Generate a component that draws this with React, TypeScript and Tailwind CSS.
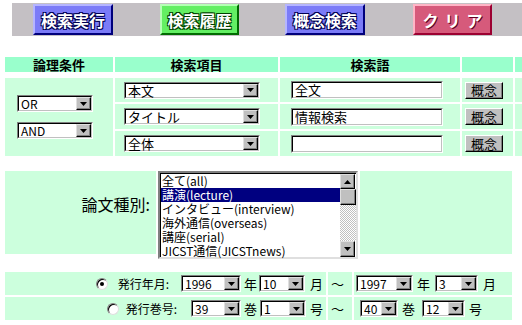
import React from "react";

function DropBtn({ up = false }: { up?: boolean }) {
  return (
    <div className="w-[15px] shrink-0 flex items-center justify-center bg-[#c0c0c0] border border-t-[#dfdfdf] border-l-[#dfdfdf] border-r-black border-b-black shadow-[inset_-1px_-1px_0_#808080]">
      <svg width="7" height="4" viewBox="0 0 7 4">
        {up ? <polygon points="0,4 7,4 3.5,0" fill="#000" /> : <polygon points="0,0 7,0 3.5,4" fill="#000" />}
      </svg>
    </div>
  );
}

function Select({ value, w, small = false }: { value: string; w: string; small?: boolean }) {
  return (
    <div className={`${w} h-[17px] shrink-0 flex border border-t-[#808080] border-l-[#808080] border-r-white border-b-white`}>
      <div className="flex flex-1 min-w-0 border border-t-black border-l-black border-r-[#c0c0c0] border-b-[#c0c0c0] bg-white">
        <span className={`flex-1 flex items-center pl-[2px] ${small ? "text-[12px]" : "text-[13px]"} leading-[13px] whitespace-nowrap text-black`}>{value}</span>
        <DropBtn />
      </div>
    </div>
  );
}

function TextInput({ value }: { value: string }) {
  return (
    <div className="w-[152px] h-[18px] flex border border-t-[#808080] border-l-[#808080] border-r-white border-b-white">
      <div className="flex-1 flex items-center border border-t-black border-l-black border-r-[#c0c0c0] border-b-[#c0c0c0] bg-white pl-[2px] text-[13px] leading-[14px] text-black whitespace-nowrap">
        {value}
      </div>
    </div>
  );
}

function ConceptBtn() {
  return (
    <div className="w-[38px] h-[17px] flex items-center justify-center bg-[#c0c0c0] border border-t-white border-l-white border-r-black border-b-black shadow-[inset_-1px_-1px_0_#808080] text-[13px] leading-[14px] text-black">
      概念
    </div>
  );
}

function Radio({ checked = false }: { checked?: boolean }) {
  return (
    <span className="w-[12px] h-[12px] shrink-0 rounded-full bg-white border border-t-[#808080] border-l-[#808080] border-r-[#dfdfdf] border-b-[#dfdfdf] shadow-[inset_1px_1px_0_#000] flex items-center justify-center">
      {checked && <span className="w-[4px] h-[4px] rounded-full bg-black" />}
    </span>
  );
}

export default function App() {
  const kinds = [
    "全て(all)",
    "講演(lecture)",
    "インタビュー(interview)",
    "海外通信(overseas)",
    "講座(serial)",
    "JICST通信(JICSTnews)",
  ];

  return (
    <div className="w-[522px] h-[325px] overflow-hidden bg-white font-['Noto_Sans_CJK_JP',sans-serif] text-black">
      {/* button bar */}
      <div className="ml-[12px] mt-[3px] h-[33px] bg-[#c4c0c4] flex items-center">
        <div className="ml-[21px] w-[80px] h-[31px] flex items-center justify-center bg-[#7b7bf7] border-2 border-t-[#b5b5ff] border-l-[#b5b5ff] border-r-[#00007b] border-b-[#00007b] text-white text-[16px] font-bold leading-[18px] [text-shadow:1px_1px_0_#000050,-1px_-1px_0_#000050,1px_-1px_0_#000050,-1px_1px_0_#000050]">
          検索実行
        </div>
        <div className="ml-[47px] w-[79px] h-[31px] flex items-center justify-center bg-[#63ef63] border-2 border-t-[#b5ffb5] border-l-[#b5ffb5] border-r-[#006b00] border-b-[#006b00] text-white text-[16px] font-bold leading-[18px] [text-shadow:1px_1px_0_#004000,-1px_-1px_0_#004000,1px_-1px_0_#004000,-1px_1px_0_#004000]">
          検索履歴
        </div>
        <div className="ml-[46px] w-[80px] h-[31px] flex items-center justify-center bg-[#7b7bf7] border-2 border-t-[#b5b5ff] border-l-[#b5b5ff] border-r-[#00007b] border-b-[#00007b] text-white text-[16px] font-bold leading-[18px] [text-shadow:1px_1px_0_#000050,-1px_-1px_0_#000050,1px_-1px_0_#000050,-1px_1px_0_#000050]">
          概念検索
        </div>
        <div className="ml-[48px] w-[79px] h-[31px] flex items-center justify-center bg-[#d65a7b] border-2 border-t-[#ffb5c6] border-l-[#ffb5c6] border-r-[#9c0031] border-b-[#9c0031] text-white text-[16px] font-bold leading-[18px] tracking-[6px] pl-[6px] [text-shadow:1px_1px_0_#600020]">
          クリア
        </div>
      </div>

      {/* search conditions */}
      <div className="ml-[5px] mt-[21px] grid grid-cols-[108px_163px_180px_51px_40px] gap-x-[2px]">
        <div className="h-[15px] bg-[#99ffcc] flex items-center justify-center text-[13px] font-bold leading-[15px]">論理条件</div>
        <div className="h-[15px] bg-[#99ffcc] flex items-center justify-center text-[13px] font-bold leading-[15px]">検索項目</div>
        <div className="h-[15px] bg-[#99ffcc] flex items-center justify-center text-[13px] font-bold leading-[15px]">検索語</div>
        <div className="h-[15px] bg-[#99ffcc]" />
        <div className="h-[15px] bg-[#99ffcc]" />
      </div>
      <div className="ml-[5px] mt-[6px] grid grid-cols-[108px_163px_180px_51px_40px] grid-rows-[24px_25px_25px] gap-[2px]">
        <div className="row-span-3 bg-[#ccffdd] flex flex-col justify-center gap-[10px] pl-[12px]">
          <Select value="OR" w="w-[76px]" small />
          <Select value="AND" w="w-[76px]" small />
        </div>
        {[
          ["本文", "全文"],
          ["タイトル", "情報検索"],
          ["全体", ""],
        ].map(([item, word], i) => (
          <React.Fragment key={i}>
            <div className="bg-[#ccffdd] flex items-center pl-[9px]">
              <Select value={item} w="w-[136px]" />
            </div>
            <div className="bg-[#ccffdd] flex items-center pl-[11px]">
              <TextInput value={word} />
            </div>
            <div className="bg-[#ccffdd] flex items-center pl-[3px]">
              <ConceptBtn />
            </div>
            <div className="bg-[#ccffdd]" />
          </React.Fragment>
        ))}
      </div>

      {/* paper kind */}
      <div className="ml-[5px] mt-[15px] flex items-start gap-[2px]">
        <div className="w-[151px] h-[83px] bg-[#ccffdd] flex justify-end pt-[24px] pr-[6px] text-[16px] leading-[18px]">
          論文種別:
        </div>
        <div className="w-[200px] h-[88px] flex border-2 border-t-[#808080] border-l-[#808080] border-r-[#dfdfdf] border-b-[#dfdfdf] shadow-[inset_1px_1px_0_#000] bg-white">
          <div className="flex-1 min-w-0 pt-[1px] pl-[1px]">
            {kinds.map((k, i) => (
              <div
                key={k}
                className={`h-[14px] pl-[1px] flex items-center text-[12px] leading-[14px] whitespace-nowrap ${i === 1 ? "bg-[#000080] text-white" : "text-black"}`}
              >
                {k}
              </div>
            ))}
          </div>
          <div className="w-[16px] flex flex-col pt-[1px]">
            <div className="h-[15px] flex">
              <DropBtn up />
            </div>
            <div className="h-[16px] bg-[#c0c0c0] border border-t-[#dfdfdf] border-l-[#dfdfdf] border-r-black border-b-black shadow-[inset_-1px_-1px_0_#808080]" />
            <div className="flex-1 [background:repeating-conic-gradient(#c0c0c0_0%_25%,#ffffff_0%_50%)_0_0/2px_2px]" />
            <div className="h-[16px] flex">
              <DropBtn />
            </div>
          </div>
        </div>
        <div className="w-[152px] h-[83px] bg-[#ccffdd]" />
      </div>

      {/* publication dates */}
      <div className="ml-[5px] mt-[13px] flex flex-col gap-[2px] text-[13px] leading-[15px]">
        <div className="flex gap-[2px] h-[23px]">
          <div className="w-[321px] bg-[#ccffdd] flex items-center justify-end pr-[3px]">
            <Radio checked />
            <span className="ml-[10px] text-[12px]">発行年月:</span>
            <span className="ml-[12px]">
              <Select value="1996" w="w-[60px]" small />
            </span>
            <span className="ml-[3px]">年</span>
            <span className="ml-[2px]">
              <Select value="10" w="w-[46px]" small />
            </span>
            <span className="ml-[5px]">月</span>
          </div>
          <div className="w-[24px] bg-[#ccffdd] flex items-center pl-[3px]">～</div>
          <div className="w-[158px] bg-[#ccffdd] flex items-center pl-[2px]">
            <Select value="1997" w="w-[57px]" small />
            <span className="ml-[4px]">年</span>
            <span className="ml-[5px]">
              <Select value="3" w="w-[43px]" small />
            </span>
            <span className="ml-[5px]">月</span>
          </div>
        </div>
        <div className="flex gap-[2px] h-[23px]">
          <div className="w-[321px] bg-[#ccffdd] flex items-center justify-end pr-[3px]">
            <Radio />
            <span className="ml-[7px] text-[12px]">発行巻号:</span>
            <span className="ml-[14px]">
              <Select value="39" w="w-[50px]" small />
            </span>
            <span className="ml-[3px]">巻</span>
            <span className="ml-[3px]">
              <Select value="1" w="w-[46px]" small />
            </span>
            <span className="ml-[4px]">号</span>
          </div>
          <div className="w-[24px] bg-[#ccffdd] flex items-center pl-[3px]">～</div>
          <div className="w-[158px] bg-[#ccffdd] flex items-center pl-[6px]">
            <Select value="40" w="w-[38px]" small />
            <span className="ml-[4px]">巻</span>
            <span className="ml-[7px]">
              <Select value="12" w="w-[43px]" small />
            </span>
            <span className="ml-[4px]">号</span>
          </div>
        </div>
      </div>
    </div>
  );
}
